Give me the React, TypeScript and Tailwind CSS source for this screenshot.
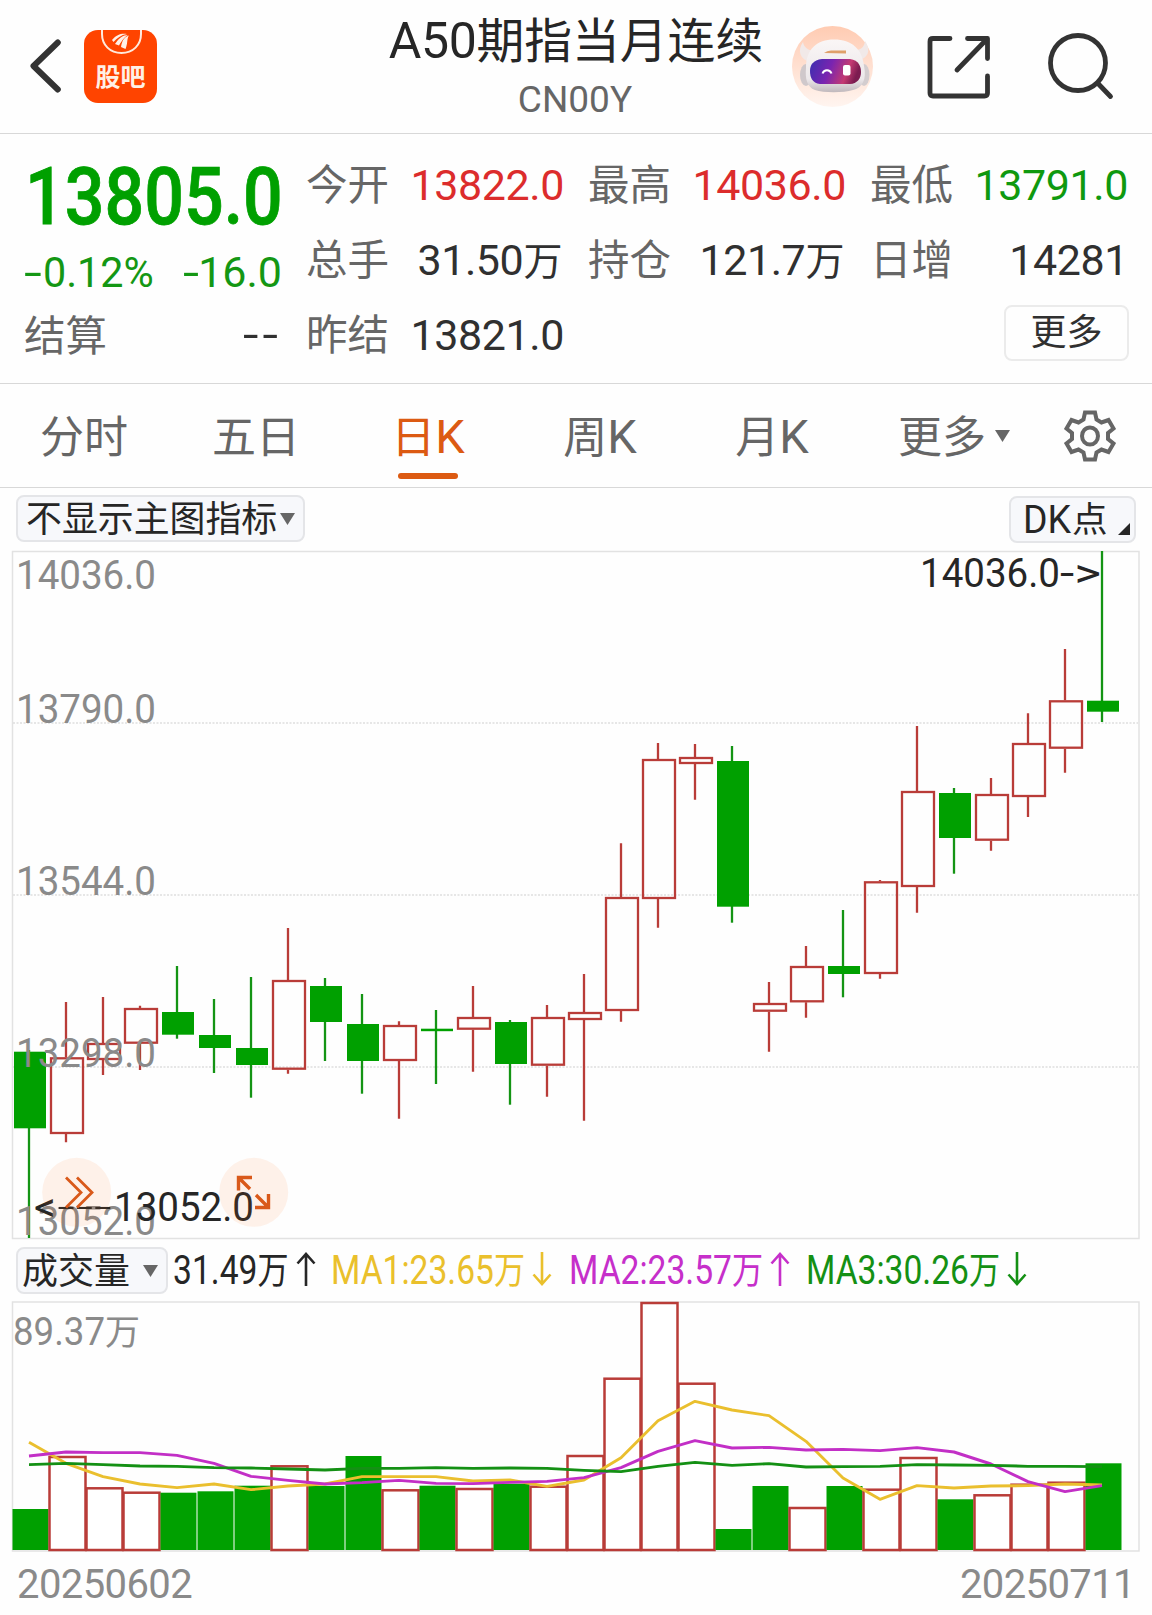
import React, { useState } from "react";

type Candle = {
  up: boolean;
  high: number;
  top: number;
  bottom: number;
  low: number;
  vol: number;
};

// [up, high, body top, body bottom, low, volume bar top] in chart coordinates
const RAW: [number, number, number, number, number, number][] = [
  [0, 1050, 1051.7, 1128.3, 1238, 1509],
  [1, 1002, 1057.3, 1134, 1142.3, 1456],
  [1, 997, 1043, 1060, 1075, 1487.3],
  [1, 1005.7, 1008, 1043.7, 1070, 1491.7],
  [0, 966, 1012, 1034.7, 1038.7, 1492.7],
  [0, 999, 1035, 1048, 1073, 1491.3],
  [0, 977, 1048, 1065, 1097.7, 1485.7],
  [1, 928, 980, 1069.7, 1073.7, 1465.3],
  [0, 978, 986, 1022, 1061, 1486],
  [0, 994, 1024, 1061, 1093.7, 1456],
  [1, 1021.3, 1025, 1061, 1118.7, 1489.3],
  [0, 1010, 1028.7, 1031.2, 1084, 1485.7],
  [1, 986, 1017, 1029.7, 1071.7, 1488],
  [0, 1020, 1022, 1064, 1104.7, 1483.7],
  [1, 1005, 1017, 1065.7, 1096.7, 1485.7],
  [1, 974, 1012, 1020, 1120.7, 1455],
  [1, 843.3, 897, 1011, 1021.7, 1377.7],
  [1, 743, 759, 899, 927.7, 1302],
  [1, 744, 757, 764, 799.7, 1382.7],
  [0, 746, 761, 906.7, 922.7, 1529],
  [1, 982, 1003, 1011.7, 1051.7, 1486],
  [1, 946, 966, 1002.3, 1017.7, 1507],
  [0, 910, 966, 974, 997.3, 1486],
  [1, 880, 881.3, 974, 978.7, 1488.7],
  [1, 726, 791, 887, 912.7, 1457],
  [0, 788, 793, 838, 873.7, 1499.3],
  [1, 778, 794, 840.7, 850.7, 1494.3],
  [1, 713.3, 743, 797, 817, 1483.7],
  [1, 649, 700.3, 748.7, 772.7, 1481.7],
  [0, 551, 700.7, 711.7, 722, 1463.3],
];

const CANDLES: Candle[] = RAW.map(([up, high, top, bottom, low, vol]) => ({
  up: up === 1,
  high,
  top,
  bottom,
  low,
  vol,
}));

// volume bar colour follows the previous close, so it can differ from the candle
const VOL_DOWN = [0, 4, 5, 6, 8, 9, 11, 13, 19, 20, 22, 25, 29];

const MA1 = [607, 670, 710, 732, 743, 732, 749, 738, 732, 710, 710, 710, 723, 720, 739, 720, 653, 542, 484, 510, 527, 604, 714, 778, 737, 744, 738, 737, 732, 735];
const MA2 = [648, 636, 638, 638, 646, 670, 709, 721, 732, 728, 721, 730, 731, 727, 724, 713, 683, 634, 602, 624, 622, 630, 628, 632, 623, 636, 672, 725, 755, 737];
const MA3 = [674, 670, 674, 678, 679, 683, 684, 687, 690, 685, 685, 683, 685, 684, 685, 691, 695, 679, 667, 676, 671, 681, 680, 679, 674, 675, 676, 679, 679, 680];

const STEP = 37;
const cx = (i: number) => 29 + STEP * i;
const toPoints = (values: number[]) => values.map((v, i) => `${cx(i)},${1240 + v / 3}`).join(" ");

const GRID = [
  { y: 723, label: "13790.0" },
  { y: 895, label: "13544.0" },
  { y: 1067, label: "13298.0" },
];

const QUOTES = [
  [
    { label: "今开", value: "13822.0", color: "text-[#dc2c2c]" },
    { label: "总手", value: "31.50", unit: "万", color: "text-[#303030]" },
    { label: "昨结", value: "13821.0", color: "text-[#303030]" },
  ],
  [
    { label: "最高", value: "14036.0", color: "text-[#dc2c2c]" },
    { label: "持仓", value: "121.7", unit: "万", color: "text-[#303030]" },
  ],
  [
    { label: "最低", value: "13791.0", color: "text-[#0f990f]" },
    { label: "日增", value: "14281", color: "text-[#303030]" },
  ],
];

const TABS = [
  { cn: "分时", latin: "" },
  { cn: "五日", latin: "" },
  { cn: "日", latin: "K" },
  { cn: "周", latin: "K" },
  { cn: "月", latin: "K" },
];

const AVERAGES = [
  { text: "MA1:23.65", up: false, color: "text-[#eac02c]" },
  { text: "MA2:23.57", up: true, color: "text-[#c62fca]" },
  { text: "MA3:30.26", up: false, color: "text-[#149014]" },
];

function Triangle({ className = "" }: { className?: string }) {
  return (
    <svg viewBox="0 0 15 12" className={`w-[15px] h-3 shrink-0 ${className}`}>
      <path d="M0 0H15L7.5 12Z" fill="#666" />
    </svg>
  );
}

function TrendArrow({ up }: { up: boolean }) {
  return (
    <svg viewBox="0 0 20 34" className="w-5 h-[34px] shrink-0 -ml-px -mt-[3px]" fill="none" stroke="currentColor" strokeWidth="2.6">
      {up ? <path d="M10 34V2M1.5 11.5L10 2L18.5 11.5" /> : <path d="M10 0V32M1.5 22.5L10 32L18.5 22.5" />}
    </svg>
  );
}

function RobotAvatar() {
  return (
    <svg viewBox="792 26 81 81" className="w-[81px] h-[81px] ml-[17px]">
      <defs>
        <linearGradient id="halo" x1="0" y1="0" x2="0" y2="1">
          <stop offset="0" stopColor="#ffcbb2" />
          <stop offset="1" stopColor="#fff5f0" />
        </linearGradient>
        <linearGradient id="visor" x1="0" y1="0" x2="1" y2="0.2">
          <stop offset="0" stopColor="#3a2fb0" />
          <stop offset="0.45" stopColor="#7a24b0" />
          <stop offset="0.8" stopColor="#c43a72" />
          <stop offset="1" stopColor="#7c1c50" />
        </linearGradient>
        <linearGradient id="shell" x1="0" y1="0" x2="0" y2="1">
          <stop offset="0" stopColor="#faf6f6" />
          <stop offset="0.75" stopColor="#ece8ea" />
          <stop offset="1" stopColor="#c0b8bc" />
        </linearGradient>
      </defs>
      <circle cx="832.5" cy="66.500" r="40.500" fill="url(#halo)" />
      <path d="M803 42C797 51 800 59 810 62L818 50C809 52 804 48 803 42Z" fill="#f1e9e8" />
      <path d="M865 41C872 51 867 59 858 60L850 49C860 52 864 48 865 41Z" fill="#f1e9e8" />
      <ellipse cx="806" cy="75" rx="6" ry="11" fill="#cfc8cb" />
      <ellipse cx="864" cy="75" rx="5.500" ry="11" fill="#d3cdcf" />
      <path d="M806 68C806 49 817 39.500 834 39.500C852 39.500 862 49 864 66C867 80 862 88 853 90C843 93 824 93 815 90C807 87 805 79 806 68Z" fill="url(#shell)" />
      <path d="M824 53Q827 50.500 831 50.500H846V53.500Z" fill="#dfa06a" />
      <path d="M822 59H850C859 60 861 67 861 72C861 79 857 83.500 850 84H820C812 83 810 77 810 71C810 65 813 60 822 59Z" fill="url(#visor)" />
      <path d="M822.500 73.500C824 69 830 69 831.500 73.500" fill="none" stroke="#fff" strokeWidth="2" />
      <rect x="843" y="65" width="7.500" height="10.500" rx="2" fill="#fff" />
    </svg>
  );
}

function Header() {
  return (
    <header className="flex h-[134px] items-center border-b border-[#d8d8d8]">
      <svg viewBox="30 38 32 56" className="w-8 h-14 ml-[30px] -mt-px" fill="none" stroke="#333" strokeWidth="6" strokeLinecap="round" strokeLinejoin="round">
        <path d="M57.800 42.500L33.500 66L57.800 89.500" />
      </svg>

      <div className="ml-[22px] w-[73px] h-[73px] rounded-[14px] bg-[#ff4400] flex flex-col items-center overflow-hidden">
        <svg viewBox="98 30 44 30" className="w-11 h-[30px] shrink-0">
          <path d="M101 29V34C101 45 109 53 120.500 53C132 53 140 45 140 34V29" fill="none" stroke="#ffe9dc" strokeWidth="2" />
          <path d="M111 40C116 34 121 33 126 34C120 35 116 38 112.500 42Z" fill="#fff0e8" />
          <path d="M114 44C118 38 122 35 127 35C125 36 121 40 118 45.500Z" fill="#fff0e8" />
          <path d="M120 47C121 41 123 37 128 35.500C125.500 39 127 43 124.500 49Z" fill="#fff0e8" />
        </svg>
        <span className="pt-[2px] text-[25px] leading-[32px] font-bold text-[#fff0e6]">股吧</span>
      </div>

      <div className="ml-[218px] w-[400px] pt-[5px] text-center">
        <h1 className="pl-[2px] text-[47.800px] leading-[58px] text-[#262626] whitespace-nowrap">
          <span className="text-[50px] tracking-[-0.400px]">A50</span>期指当月连续
        </h1>
        <div className="pt-[3px] text-[37px] leading-[52px] text-[#666]">CN00Y</div>
      </div>

      <RobotAvatar />

      <svg viewBox="926 33 66 66" className="w-[66px] h-[66px] ml-[53px]" fill="none" stroke="#333" strokeWidth="4.800" strokeLinecap="round" strokeLinejoin="round">
        <path d="M950 37.500H933Q930 37.500 930 40.500V92Q930 95 933 95H984.500Q987.500 95 987.500 92V75" />
        <path d="M967.500 37.500H987.500V57.500M987 38L957 69" />
      </svg>

      <svg viewBox="1046 32 68 68" className="w-[68px] h-[68px] ml-[54px] -mt-px" fill="none" stroke="#333" strokeWidth="4.800" strokeLinecap="round">
        <circle cx="1078" cy="63" r="27.500" />
        <path d="M1098.500 84L1110.500 96.500" />
      </svg>
    </header>
  );
}

function QuotePanel() {
  return (
    <section className="grid h-[250px] grid-cols-4 gap-6 border-b border-[#d8d8d8] px-6 pt-3">
      <div className="flex flex-col">
        <div className="h-[94px] pl-px pt-[3px]">
          <span className="inline-block origin-left scale-x-[0.885] text-[79px] leading-[96px] font-medium text-[#00a000] whitespace-nowrap [-webkit-text-stroke:0.8px_#00a000]">
            13805.0
          </span>
        </div>
        <div className="flex h-[60px] items-center justify-between pt-[4px] text-[43px] text-[#149714] whitespace-nowrap">
          <div className="flex">
            <span className="inline-block w-[19px] origin-left scale-x-150">-</span>
            <span className="inline-block w-[110px] origin-left scale-x-[0.960]">0.12%</span>
          </div>
          <div className="flex">
            <span className="inline-block w-[15px] origin-left scale-x-[1.350]">-</span>
            <span>16.0</span>
          </div>
        </div>
        <div className="flex h-[71px] items-center justify-between pt-[3px]">
          <span className="text-[41.500px] text-[#666]">结算</span>
          <span className="-mt-1.5 origin-right scale-x-[1.300] text-[43px] tracking-[3px] text-[#303030]">--</span>
        </div>
      </div>

      {QUOTES.map((column, idx) => (
        <div key={idx} className="flex flex-col">
          {column.map((q) => (
            <div key={q.label} className="flex h-[75px] items-center justify-between pt-[3px] whitespace-nowrap">
              <span className="pt-[2px] text-[41.500px] text-[#666]">{q.label}</span>
              <span className={`text-[43px] tracking-[-0.400px] ${q.unit ? "pr-0.5" : ""} ${q.color}`}>
                {q.value}
                {q.unit && <span className="text-[39px]">{q.unit}</span>}
              </span>
            </div>
          ))}
          {idx === 2 && (
            <button className="mt-[9px] h-[56px] w-[125px] -mr-px self-end rounded-lg border-2 border-[#ebebeb] text-[36px] leading-[50px] text-[#303030]">
              更多
            </button>
          )}
        </div>
      ))}
    </section>
  );
}

function PeriodTabs() {
  const [active, setActive] = useState(2);

  return (
    <nav className="flex h-[104px] items-center border-b border-[#d8d8d8] text-[#666]">
      {TABS.map((tab, idx) => (
        <button
          key={idx}
          onClick={() => setActive(idx)}
          className={`relative flex h-full w-[172px] items-center justify-center pr-1 pt-[4px] text-[44px] whitespace-nowrap ${
            active === idx ? "text-[#dc5a12]" : ""
          }`}
        >
          {tab.cn}
          {tab.latin && <span className="text-[47px]">{tab.latin}</span>}
          {active === idx && <span className="absolute bottom-2 left-[54px] h-1.5 w-[60px] rounded-full bg-[#dc5a12]" />}
        </button>
      ))}
      <button className="ml-[38px] flex items-center pt-[4px] text-[44px]">
        更多
        <Triangle className="ml-[9px] -mt-1" />
      </button>
      <svg viewBox="-27 -27 54 54" className="ml-[53px] h-[54px] w-[54px]" fill="none" stroke="#666" strokeWidth="4">
        <path d="M-5 -23.500H5L6.500 -16.500L11.500 -13.500L18.500 -16L23.500 -7.500L18 -3V3L23.500 7.500L18.500 16L11.500 13.500L6.500 16.500L5 23.500H-5L-6.500 16.500L-11.500 13.500L-18.500 16L-23.500 7.500L-18 3V-3L-23.500 -7.500L-18.500 -16L-11.500 -13.500L-6.500 -16.500Z" />
        <ellipse rx="8" ry="8.500" />
      </svg>
    </nav>
  );
}

function IndicatorBar() {
  return (
    <div className="flex h-[62px] items-start justify-between px-4 pt-[7px] text-[#262626]">
      <button className="flex h-[47px] w-[289px] items-center rounded-lg border-2 border-[#e4e5e8] bg-[#f7f8fb] pl-2 pt-[4px] text-[35.900px] whitespace-nowrap">
        不显示主图指标
        <Triangle className="ml-[3px] -mt-1" />
      </button>
      <button className="mt-px flex h-[47px] w-[127px] items-center rounded-lg border-2 border-[#e4e5e8] bg-[#f7f8fb] pl-3 pt-[2px] text-[35.500px] whitespace-nowrap">
        <span className="inline-block w-[49px] origin-left scale-x-[0.960] text-[39px]">DK</span>点
        <svg viewBox="0 0 12 12" className="ml-2.5 mb-1.5 h-3 w-3 shrink-0 self-end">
          <path d="M12 0V12H0Z" fill="#262626" />
        </svg>
      </button>
    </div>
  );
}

function CandleChart() {
  return (
    <svg viewBox="0 550 1152 690" className="block h-[690px] w-full">
      <rect x="12.500" y="551.500" width="1126.500" height="687" fill="none" stroke="#e2e2e2" strokeWidth="1.500" />
      {GRID.map((g) => (
        <line key={g.y} x1="13" x2="1138" y1={g.y} y2={g.y} stroke="#dedede" strokeWidth="1.500" strokeDasharray="2 1.500" />
      ))}

      {CANDLES.map((c, i) => {
        const x = cx(i);
        return c.up ? (
          <g key={i} fill="none" stroke="#b93c38" strokeWidth="2.300">
            <path d={`M${x} ${c.high}V${c.top}M${x} ${c.bottom}V${c.low}`} />
            <rect x={x - 15} y={c.top + 1} width="32" height={c.bottom - c.top - 2} />
          </g>
        ) : (
          <g key={i}>
            <path d={`M${x} ${c.high}V${c.low}`} stroke="#149414" strokeWidth="2.300" />
            <rect x={x - 15} y={c.top} width="32" height={c.bottom - c.top} fill="#00a000" />
          </g>
        );
      })}

      <g fill="#8a8a8a" fontSize="41">
        <text x="16" y="589" textLength="140" lengthAdjust="spacingAndGlyphs">14036.0</text>
        {GRID.map((g) => (
          <text key={g.label} x="16" y={g.y} textLength="140" lengthAdjust="spacingAndGlyphs">
            {g.label}
          </text>
        ))}
        <text x="16" y="1234.500" textLength="140" lengthAdjust="spacingAndGlyphs">13052.0</text>
      </g>

      <g fill="#262626" fontSize="41">
        <text x="920" y="587" textLength="140" lengthAdjust="spacingAndGlyphs">14036.0</text>
        <text x="1060" y="587" textLength="41" lengthAdjust="spacingAndGlyphs">-&gt;</text>
        <text x="34" y="1221" textLength="22" lengthAdjust="spacingAndGlyphs">&lt;</text>
        <text x="57" y="1221" fontWeight="300" textLength="55" lengthAdjust="spacingAndGlyphs">---</text>
        <text x="114" y="1221" textLength="140" lengthAdjust="spacingAndGlyphs">13052.0</text>
      </g>

      {/* floating shortcuts */}
      <circle cx="76.700" cy="1192.300" r="34.500" fill="#ff6a1a" fillOpacity="0.09" />
      <circle cx="253.700" cy="1192.300" r="34.500" fill="#ff6a1a" fillOpacity="0.09" />
      <g fill="none" stroke="#d9591a" strokeWidth="2.800">
        <path d="M66 1177.500L81 1192.500L66 1207.500M77 1177.500L92 1192.500L77 1207.500" />
        <path d="M252 1177.500H238.500V1190.500M238.500 1177.500L250 1189M255 1207.500H268.500V1194M268.500 1207.500L256 1195" strokeWidth="3.400" />
      </g>
    </svg>
  );
}

function VolumeBar() {
  return (
    <div className="flex h-[61px] items-center pl-4 text-[#262626]">
      <button className="flex h-[47px] w-[152px] items-center rounded-lg border-2 border-[#e4e5e8] bg-[#f7f8fb] pl-1 pt-[2px] text-[36px] whitespace-nowrap">
        成交量
        <Triangle className="ml-[13px] -mt-0.5" />
      </button>
      <div className="ml-[5px] flex w-[158px] items-center">
        <span className="inline-block w-[124px] origin-left scale-x-[0.840] text-[40px] whitespace-nowrap">
          31.49<span className="text-[37px]">万</span>
        </span>
        <TrendArrow up />
      </div>
      {AVERAGES.map((ma) => (
        <div key={ma.text} className={`flex w-[237.500px] items-center ${ma.color}`}>
          <span className="inline-block w-[202px] origin-left scale-x-[0.840] text-[40px] whitespace-nowrap">
            {ma.text}
            <span className="text-[37px]">万</span>
          </span>
          <TrendArrow up={ma.up} />
        </div>
      ))}
    </div>
  );
}

function VolumeChart() {
  return (
    <svg viewBox="0 1301 1152 252" className="block h-[252px] w-full">
      <rect x="12.500" y="1302" width="1126.500" height="249" fill="none" stroke="#e2e2e2" strokeWidth="1.500" />
      <text x="13" y="1345" fill="#8a8a8a" fontSize="38">
        <tspan textLength="92" lengthAdjust="spacingAndGlyphs">89.37</tspan>
        <tspan x="105" fontSize="35">万</tspan>
      </text>
      {CANDLES.map((c, i) =>
        VOL_DOWN.includes(i) ? (
          <rect key={i} x={12.5 + STEP * i} y={c.vol} width="36" height={1550 - c.vol} fill="#00a000" />
        ) : (
          <rect key={i} x={12.5 + STEP * i} y={c.vol + 1} width="36" height={1549 - c.vol} fill="#fff" stroke="#b93c38" strokeWidth="2.500" />
        )
      )}
      <g fill="none" strokeWidth="2.900" strokeLinejoin="round">
        <polyline points={toPoints(MA1)} stroke="#eabf2e" />
        <polyline points={toPoints(MA2)} stroke="#c22fc6" />
        <polyline points={toPoints(MA3)} stroke="#149014" />
      </g>
    </svg>
  );
}

export default function App() {
  return (
    <div className="w-[1152px] h-[1615px] overflow-hidden bg-[#fefefe] font-['Roboto','Noto_Sans_CJK_SC',sans-serif]">
      <Header />
      <QuotePanel />
      <PeriodTabs />
      <IndicatorBar />
      <CandleChart />
      <VolumeBar />
      <VolumeChart />
      <div className="flex justify-between pl-[17px] pr-[17px] pt-[4px] text-[40px] leading-[56px] tracking-[-0.600px] text-[#8a8a8a]">
        <span>20250602</span>
        <span>20250711</span>
      </div>
    </div>
  );
}
